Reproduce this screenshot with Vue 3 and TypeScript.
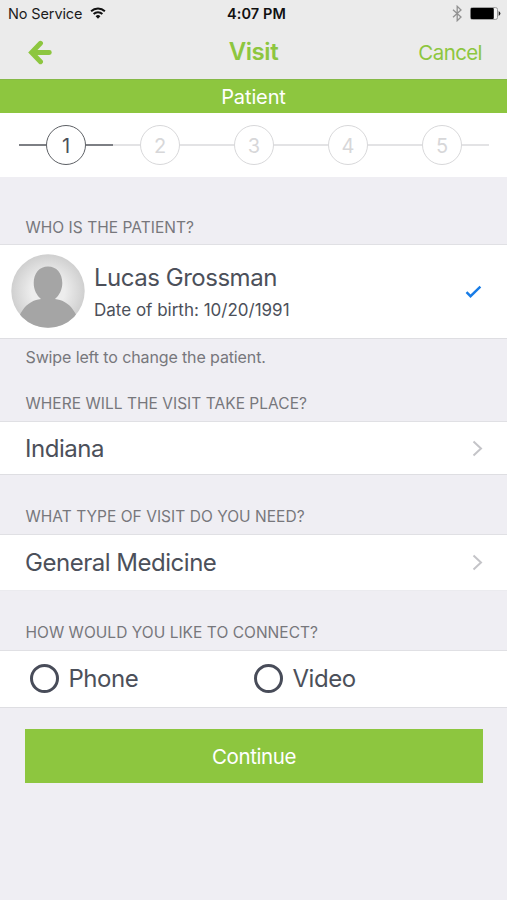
<script setup lang="ts">
import { ref } from 'vue'

const steps: number[] = [1, 2, 3, 4, 5]
const current = ref(1)
const choice = ref('')
const channels: string[] = ['Phone', 'Video']
</script>

<template>
  <main class="screen">
    <header class="top">
      <div class="status">
        <span class="carrier">No Service</span>
        <svg class="wifi" width="16" height="12" viewBox="0 0 16 12">
          <path d="M1.1 4.3a9.9 9.9 0 0 1 13.8 0M3.6 7a6.3 6.3 0 0 1 8.8 0" fill="none" stroke="#111" stroke-width="1.9" />
          <path d="M8 11.7 5.6 9.2a3.5 3.5 0 0 1 4.8 0z" fill="#111" />
        </svg>
        <span class="clock">4:07 PM</span>
        <svg class="bluetooth" width="11" height="17" viewBox="0 0 11 17">
          <path d="M1 4.7 9 12 5.2 15.7V1.3L9 5 1 12.3" fill="none" stroke="#929292" stroke-width="1.3" />
        </svg>
        <svg class="battery" width="31" height="13" viewBox="0 0 31 13">
          <rect x="0.5" y="0.6" width="27" height="11.8" rx="1.8" fill="#f4f4f4" stroke="#999" />
          <rect x="0.8" y="1" width="23" height="11" rx="1" fill="#000" />
          <path d="M28.7 4q3.4 2.500 0 5z" fill="#222" />
        </svg>
      </div>
      <nav class="nav">
        <svg class="back" width="25" height="25" viewBox="0 0 25 25">
          <path d="M13.5 3.300 4.600 12.500l8.900 9.200M5 12.500h17.300" fill="none" stroke="#8dc63f" stroke-width="4.900" stroke-linecap="round" stroke-linejoin="miter" />
        </svg>
        <h1 class="title">Visit</h1>
        <span class="cancel">Cancel</span>
      </nav>
    </header>

    <div class="banner"><span>Patient</span></div>

    <ol class="steps">
      <li v-for="n in steps" :key="n" class="step" :class="{ active: n === current }">
        <span class="dot">{{ n }}</span>
      </li>
    </ol>

    <h2 class="label who">WHO IS THE PATIENT?</h2>
    <section class="row patient">
      <svg class="avatar" width="74" height="74" viewBox="0 0 74 74">
        <defs>
          <radialGradient id="avatar-bg">
            <stop offset="0.45" stop-color="#ededed" />
            <stop offset="1" stop-color="#cfcfcf" />
          </radialGradient>
          <clipPath id="avatar-clip"><circle cx="37" cy="37" r="36.7" /></clipPath>
        </defs>
        <g clip-path="url(#avatar-clip)">
          <rect width="74" height="74" fill="url(#avatar-bg)" />
          <path d="M37 12.500c8.500 0 14.300 6.500 14.300 16.500 0 6.500-3 12.500-7.300 16 3.500.4 6.500 1.300 9.500 3 5.500 3 8.500 7 11.500 12.500V74H9V60.500c3-5.500 6-9.500 11.500-12.500 3-1.700 6-2.600 9.500-3-4.300-3.500-7.300-9.500-7.300-16 0-10 5.800-16.500 14.300-16.500z" fill="#a5a5a5" />
        </g>
      </svg>
      <div class="person">
        <span class="value name">Lucas Grossman</span>
        <span class="dob">Date of birth: 10/20/1991</span>
      </div>
      <svg class="check" width="17" height="14" viewBox="0 0 17 14">
        <path d="M1.500 7.200 5.500 11.200 15.400 1.700" fill="none" stroke="#187ce6" stroke-width="2.400" />
      </svg>
    </section>
    <p class="hint">Swipe left to change the patient.</p>

    <h2 class="label where">WHERE WILL THE VISIT TAKE PLACE?</h2>
    <section class="row place">
      <span class="value">Indiana</span>
      <svg class="chevron" width="11" height="17" viewBox="0 0 11 17">
        <path d="M1.500 1.500 9 8.500 1.500 15.500" fill="none" stroke="#c4c4c8" stroke-width="2" />
      </svg>
    </section>

    <h2 class="label what">WHAT TYPE OF VISIT DO YOU NEED?</h2>
    <section class="row kind">
      <span class="value">General Medicine</span>
      <svg class="chevron" width="11" height="17" viewBox="0 0 11 17">
        <path d="M1.500 1.500 9 8.500 1.500 15.500" fill="none" stroke="#c4c4c8" stroke-width="2" />
      </svg>
    </section>

    <h2 class="label how">HOW WOULD YOU LIKE TO CONNECT?</h2>
    <section class="row connect">
      <label v-for="c in channels" :key="c" class="option" @click="choice = c">
        <span class="radio" :class="{ picked: choice === c }"></span>
        <span class="value">{{ c }}</span>
      </label>
    </section>

    <button class="continue" type="button"><span>Continue</span></button>
  </main>
</template>

<style>
body {
  background: #efeef3;
}
</style>

<style scoped>
.screen {
  box-sizing: border-box;
  width: 507px;
  height: 900px;
  overflow: hidden;
  background: #efeef3;
  color: #4c505a;
  font-family: Inter, Roboto, "Liberation Sans", sans-serif;
  display: flex;
  flex-direction: column;
}
.screen > * {
  flex: none;
  box-sizing: border-box;
}
.top {
  height: 79px;
  background: #ebebeb;
}
.status {
  height: 28px;
  display: grid;
  grid-template-columns: 82px 137px 60px 1fr 38px;
  align-items: center;
  padding: 0 6px 0 8px;
  font-size: 14.500px;
  color: #1c1c1c;
  white-space: nowrap;
}
.carrier {
  margin-top: -1px;
  letter-spacing: -0.120px;
}
.wifi {
  margin-top: -2px;
}
.clock {
  margin-top: -1px;
  color: #111;
  font-weight: 600;
  letter-spacing: 0.100px;
}
.bluetooth {
  justify-self: end;
  margin-top: -1px;
}
.battery {
  justify-self: end;
  margin-top: -1px;
}
.nav {
  height: 50px;
  display: grid;
  grid-template-columns: 1fr 60px 1fr;
  align-items: center;
  padding: 0 25px 0 27px;
  color: #8dc63f;
}
.back {
  margin-top: -2px;
}
.title {
  margin: -3px 0 0 -2px;
  text-align: center;
  font-size: 24px;
  line-height: 30px;
  font-weight: 600;
  letter-spacing: -0.450px;
}
.cancel {
  justify-self: end;
  font-size: 20.500px;
  letter-spacing: -0.600px;
  margin-top: -1px;
}
.banner {
  height: 34px;
  background: #8dc63f;
  border-top: 1px solid #86b947;
  color: #fff;
  display: flex;
  align-items: center;
  justify-content: center;
  font-size: 20px;
  letter-spacing: -0.120px;
  padding-top: 1px;
}
.steps {
  height: 64px;
  margin: 0;
  padding: 0 18px 0 19px;
  list-style: none;
  background: #fff;
  display: grid;
  grid-template-columns: repeat(5, 94px);
}
.step {
  display: flex;
  align-items: center;
  color: #d7d7d9;
}
.step::before,
.step::after {
  content: "";
  flex: 1;
  height: 2px;
  background: #e3e3e5;
}
.dot {
  box-sizing: border-box;
  width: 40px;
  height: 40px;
  border: 1.500px solid #d8d8da;
  border-radius: 50%;
  display: flex;
  align-items: center;
  justify-content: center;
  font-size: 20px;
  padding-top: 1px;
}
.step.active {
  color: #4c505a;
}
.step.active::before,
.step.active::after {
  background: #7d7f84;
}
.step.active .dot {
  border-color: #5d6065;
}
.label {
  margin: 0;
  padding: 0 0 7px 25.500px;
  display: flex;
  align-items: flex-end;
  color: #77777c;
  font-size: 15.500px;
  line-height: 20px;
  font-weight: 400;
  letter-spacing: 0.030px;
  white-space: nowrap;
}
.who {
  height: 67px;
  padding-bottom: 6px;
}
.row {
  background: #fff;
  border-top: 1px solid #e0e0e4;
  border-bottom: 1px solid #dedee2;
  display: flex;
  align-items: center;
  padding: 0 24px 0 25px;
}
.value {
  font-size: 24px;
  line-height: 30px;
  letter-spacing: -0.480px;
  white-space: nowrap;
}
.patient {
  height: 95px;
  padding: 0 25px 0 10.500px;
}
.avatar {
  margin-top: -1px;
}
.person {
  flex: 1;
  margin-left: 9.500px;
  margin-top: 2px;
  display: flex;
  flex-direction: column;
  gap: 5px;
}
.dob {
  font-size: 17px;
  line-height: 24px;
}
.hint {
  margin: 0;
  height: 36px;
  padding: 8px 0 0 25.500px;
  color: #77777c;
  font-size: 16px;
  line-height: 20px;
  letter-spacing: -0.120px;
}
.where {
  height: 46px;
}
.place {
  height: 54px;
  padding-top: 1px;
}
.chevron {
  margin-left: auto;
  margin-top: -1px;
}
.what {
  height: 59px;
}
.kind {
  height: 57px;
  border-bottom-color: #ebebef;
}
.how {
  height: 59px;
}
.connect {
  height: 58px;
  padding: 0 0 0 30px;
}
.option {
  width: 224px;
  display: flex;
  align-items: center;
  gap: 9.500px;
}
.radio {
  box-sizing: border-box;
  width: 29px;
  height: 29px;
  margin-top: -2px;
  border: 3px solid #484c59;
  border-radius: 50%;
}
.radio.picked {
  background: #484c59;
  box-shadow: inset 0 0 0 4px #fff;
}
.continue {
  margin: 21px 0 0 25px;
  width: 458px;
  height: 54px;
  padding: 0;
  border: 0;
  background: #8dc63f;
  color: #fff;
  font-family: inherit;
  font-size: 20.500px;
  letter-spacing: -0.400px;
}
</style>
